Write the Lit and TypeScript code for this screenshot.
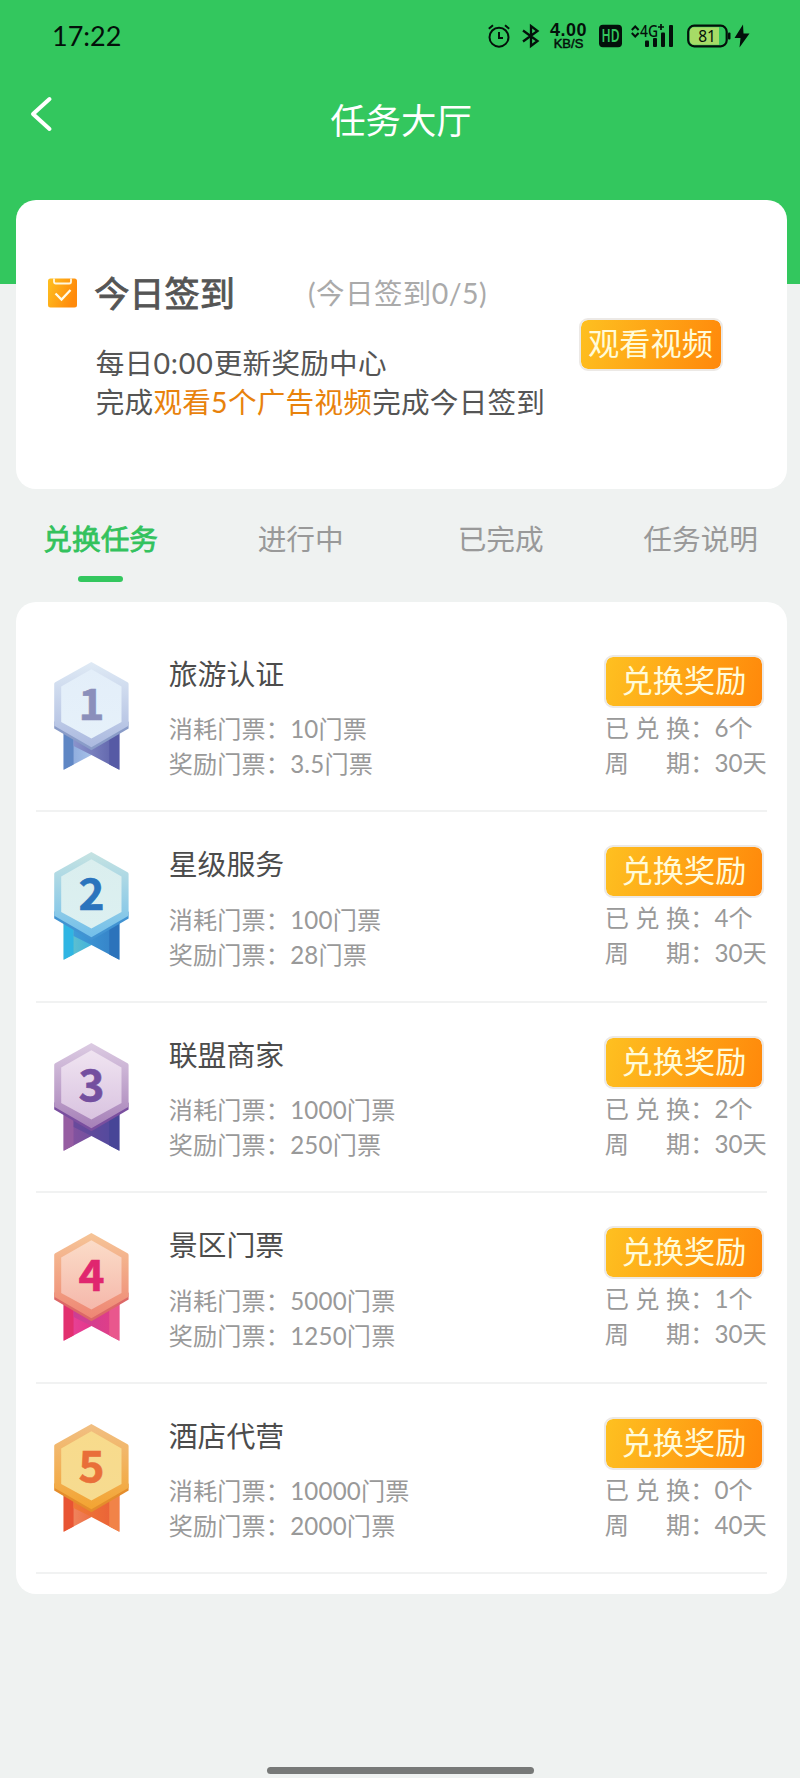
import { LitElement, html, svg, css } from "lit";
import { customElement, property } from "lit/decorators.js";

interface Medal {
  edgeTop: string; edgeBottom: string; side: string;
  faceTop: string; faceBottom: string; digit: string;
  left: string; midA: string; midB: string; darkA: string; darkB: string; right: string;
}

interface Task {
  title: string; cost: string; reward: string; used: string; period: string; medal: Medal;
}

const TASKS: Task[] = [
  { title: "旅游认证", cost: "10", reward: "3.5", used: "6", period: "30",
    medal: { edgeTop: "#dfeaf5", edgeBottom: "#abb9df", side: "#8a9cc8", faceTop: "#e3eef9", faceBottom: "#e6f1fa", digit: "#8b8fbb",
      left: "#5f86c4", midA: "#86a3d8", midB: "#a9c4ea", darkA: "#8a93cb", darkB: "#5b5fa8", right: "#565aa5" } },
  { title: "星级服务", cost: "100", reward: "28", used: "4", period: "30",
    medal: { edgeTop: "#c6e3e2", edgeBottom: "#72bfea", side: "#4193d2", faceTop: "#daeeee", faceBottom: "#dcf0f1", digit: "#2b74bd",
      left: "#2fb5e3", midA: "#6cc5c9", midB: "#3cb1de", darkA: "#3f9bd8", darkB: "#3480c6", right: "#2c73bb" } },
  { title: "联盟商家", cost: "1000", reward: "250", used: "2", period: "30",
    medal: { edgeTop: "#dccbe2", edgeBottom: "#a680b8", side: "#7a4f9f", faceTop: "#f0e4f1", faceBottom: "#d9c3e0", digit: "#744f9f",
      left: "#965da2", midA: "#8b549f", midB: "#70509f", darkA: "#6a4a9b", darkB: "#4f4a9e", right: "#474597" } },
  { title: "景区门票", cost: "5000", reward: "1250", used: "1", period: "30",
    medal: { edgeTop: "#f6c597", edgeBottom: "#ee8674", side: "#dc6867", faceTop: "#fbdcc8", faceBottom: "#f5b8ab", digit: "#e0266f",
      left: "#e2306f", midA: "#e8479a", midB: "#e4338a", darkA: "#cb3f94", darkB: "#e43d86", right: "#e9578d" } },
  { title: "酒店代营", cost: "10000", reward: "2000", used: "0", period: "40",
    medal: { edgeTop: "#f1bf83", edgeBottom: "#f3a431", side: "#e48d2c", faceTop: "#f8db8c", faceBottom: "#f6db90", digit: "#e96f39",
      left: "#e85433", midA: "#f18e67", midB: "#ec6c43", darkA: "#ef7a35", darkB: "#ea5e38", right: "#f18348" } },
];

@customElement("status-bar")
class StatusBar extends LitElement {
  static styles = css`
    :host { display: flex; align-items: center; height: 72px; padding: 0 50.500px 0 52px; color: #03100a; box-sizing: border-box; }
    .time { font-size: 27px; line-height: 36px; margin: -1px auto 0 0; }
    svg { display: block; flex: none; overflow: visible; }
    .alarm { margin-right: 11.500px; }
    .bt { margin-right: 8.500px; }
    .speed { width: 40px; margin-right: 10px; text-align: center; font-family: "Liberation Sans", sans-serif; white-space: nowrap; }
    .num { font-size: 18px; line-height: 15px; font-weight: 700; letter-spacing: 0.500px; }
    .unit { font-size: 13px; line-height: 12px; -webkit-text-stroke: 0.500px; }
    .hd { margin-right: 9.500px; }
    .signal { margin-right: 12.500px; }
    .battery { margin-right: 3px; }
    text { font-family: "Noto Sans", sans-serif; }
  `;
  render() {
    return html`
      <div class="time">17:22</div>
      <svg class="alarm" width="23" height="24" viewBox="0 0 23 24" fill="none" stroke="currentColor" stroke-width="2">
        <circle cx="11" cy="13.2" r="9.5" /><path d="M11 8v6h4M.8 4.700 5 1.300M21.200 4.700l-4.200-3.400" />
      </svg>
      <svg class="bt" width="18" height="24" viewBox="0 0 18 24" fill="none" stroke="currentColor" stroke-width="2.300">
        <path d="M1 6.500 15.500 17 9 22V2l6.500 5L1 17.500" />
      </svg>
      <div class="speed"><div class="num">4.00</div><div class="unit">KB/S</div></div>
      <svg class="hd" width="23" height="24" viewBox="0 0 23 24">
        <rect y=".7" width="23" height="22.600" rx="4" fill="currentColor" />
        <text x="11.5" y="18" text-anchor="middle" font-size="17" font-weight="600" textLength="18" lengthAdjust="spacingAndGlyphs" fill="#33c75e">HD</text>
      </svg>
      <svg class="signal" width="43" height="24" viewBox="0 0 43 24" fill="currentColor">
        <path d="M.8 6 4.200 2.500 7.600 6M.8 9l3.400 3.500L7.600 9" fill="none" stroke="currentColor" stroke-width="2" />
        <text x="9" y="12.500" font-size="15.500" font-weight="500" textLength="18" lengthAdjust="spacingAndGlyphs">4G</text>
        <path d="M30 0v6M27 3h6" stroke="currentColor" stroke-width="1.700" />
        <rect x="14" y="16.500" width="4" height="6.500" rx="1" /><rect x="22" y="14" width="4" height="9" rx="1" />
        <rect x="30" y="8.500" width="4" height="14.500" rx="1" /><rect x="38" y="1" width="4" height="22" rx="1" />
      </svg>
      <svg class="battery" width="44" height="24" viewBox="0 0 44 24">
        <rect x="1.200" y="1.700" width="38.500" height="20.600" rx="6" fill="none" stroke="currentColor" stroke-width="2.200" />
        <path d="M7 3.300h25v17.400H7a4.200 4.200 0 0 1-4.200-4.200v-9A4.200 4.200 0 0 1 7 3.300Z" fill="#a6db66" />
        <rect x="41" y="8.500" width="2.500" height="7" rx="1" fill="currentColor" />
        <text x="20" y="17.500" text-anchor="middle" font-size="15.500" fill="currentColor">81</text>
      </svg>
      <svg width="16" height="24" viewBox="0 0 16 24"><path d="M9 .5.500 14h6L5.500 23.500 15.500 9.500H9.500Z" fill="currentColor" /></svg>
    `;
  }
}

@customElement("rank-medal")
class RankMedal extends LitElement {
  @property({ type: Number }) rank = 1;
  @property({ attribute: false }) tone!: Medal;
  static styles = css`
    :host { display: block; width: 75px; height: 109px; }
    svg { display: block; }
    text { font-family: "Noto Sans CJK SC", sans-serif; font-weight: 700; font-size: 43.500px; stroke-width: 0.600px; }
  `;
  render() {
    const t = this.tone;
    const grad = (id: string, a: string, b: string, down: boolean) => svg`
      <linearGradient id=${id} x1="0" y1="0" x2=${down ? 0 : 1} y2=${down ? 1 : 0}>
        <stop offset="0" stop-color=${a} /><stop offset="1" stop-color=${b} />
      </linearGradient>`;
    return html`<svg width="75" height="109" viewBox="0 0 74 109" preserveAspectRatio="none">
      <defs>
        ${grad("edge", t.edgeTop, t.edgeBottom, true)}
        ${grad("face", t.faceTop, t.faceBottom, true)}
        ${grad("mid", t.midA, t.midB, false)}
        ${grad("dark", t.darkA, t.darkB, false)}
      </defs>
      <path d="M9.500 60V107.800L37 93 40 80V60Z" fill="url(#mid)" />
      <path d="M9.500 60V107.800L19.300 102.500V60Z" fill=${t.left} />
      <path d="M19.300 84 37 93 64.500 107.800V60H19.300Z" fill="url(#dark)" />
      <path d="M54.500 60V102.500L64.500 107.800V60Z" fill=${t.right} />
      <path d="M36.900 6 73.600 60V66.500L36.900 88.200.2 66.500V60Z" fill=${t.side} />
      <path d="M36.900 0 72.600 20.200Q73.600 20.800 73.600 22V63.700L36.900 85.200.2 63.700V22Q.2 20.800 1.200 20.200Z" fill="url(#edge)" />
      <path d="M36.900 7.300 66.600 24.600V60L36.900 76.500 7.100 60V24.600Z" fill="url(#face)" />
      <text x="36.900" y="57.800" text-anchor="middle" fill=${t.digit} stroke=${t.digit}>${this.rank}</text>
    </svg>`;
  }
}

@customElement("app-root")
class AppRoot extends LitElement {
  static styles = css`
    :host { display: flex; flex-direction: column; box-sizing: border-box; width: 800px; height: 1778px; overflow: hidden;
      background: linear-gradient(#33c75e 284.500px, #eff2f1 284.500px); font-family: Lato, "Noto Sans CJK SC", sans-serif; }
    .nav { display: grid; grid-template-columns: 101px 1fr 99px; height: 128px; color: #fff; }
    .back { display: block; margin: 24px 0 0 30px; }
    .heading { font-size: 35.400px; line-height: 40px; text-align: center; margin-top: 29px; }
    .card { margin: 0 13.500px 0 15.700px; background: #fff; border-radius: 20px; box-sizing: border-box; }
    .sign { height: 289px; display: flex; padding: 71.500px 64px 0 32.500px; justify-content: space-between; }
    .head { display: flex; align-items: center; height: 42px; }
    .head svg { display: block; margin-right: 17px; }
    .today { font-size: 35.200px; line-height: 42px; color: #555; -webkit-text-stroke: 0.900px #555; }
    .count { font-size: 28.500px; line-height: 42px; margin: 1px 0 0 73px; color: #aaa; white-space: nowrap; letter-spacing: 0.450px; }
    .info { font-size: 28.600px; line-height: 39px; color: #555; margin: 30.500px 0 0 47.500px; white-space: nowrap; letter-spacing: 0.250px; }
    .info i { font-style: normal; letter-spacing: 0.850px; }
    .info b { font-weight: 400; color: #e8820c; }
    .btn { box-sizing: border-box; height: 53px; padding: 0; border: 2px solid #ece9e6; border-radius: 9px; color: #fffbd9;
      background: linear-gradient(105deg, #fec121, #ff870a) border-box; background-clip: padding-box; font: inherit; font-size: 31.200px; line-height: 44px; display: block; white-space: nowrap; }
    .btn span { display: block; margin-top: -3px; }
    .watch { width: 144px; margin-top: 46.500px; flex: none; }
    .swap { width: 160px; margin-left: 0; }
    .tabs { display: grid; grid-template-columns: repeat(4, 200px); height: 113px; padding: 30px 0 0 0.700px; box-sizing: border-box; font-size: 28.700px; line-height: 40px; color: #999; text-align: center; }
    .on { color: #33c25d; -webkit-text-stroke: 0.800px #33c25d; }
    .on::after { content: ""; display: block; width: 44.500px; height: 6.500px; border-radius: 3px; background: #33c75e; margin: 16.500px auto 0; }
    .list { height: 992px; padding: 19.800px 19.500px 0 20.300px; flex: none; }
    .row { display: grid; grid-template-columns: 132.700px 1fr 163px; height: 190.500px; box-sizing: border-box; border-bottom: 2px solid #f1f2f2; }
    .row rank-medal { margin: 40px 0 0 18px; }
    .title { font-size: 28.900px; line-height: 36px; margin: 34px 0 19.500px; color: #4c4c4c; }
    .meta { font-size: 24.100px; line-height: 35px; color: #999; white-space: nowrap; letter-spacing: 0.200px; }
    .side { padding-top: 33.200px; }
    .pair { display: flex; font-size: 24.200px; line-height: 35px; color: #999; white-space: nowrap; margin-left: 0.700px; }
    .used { padding-top: 2px; }
    .key { display: flex; justify-content: space-between; width: 85.500px; }
    .handle { width: 267px; height: 7px; border-radius: 3.500px; background: #777978; margin: auto auto 4px; }
  `;

  private row(t: Task, i: number) {
    return html`<div class="row">
      <rank-medal .rank=${i + 1} .tone=${t.medal}></rank-medal>
      <div>
        <div class="title">${t.title}</div>
        <div class="meta">消耗门票：${t.cost}门票</div>
        <div class="meta">奖励门票：${t.reward}门票</div>
      </div>
      <div class="side">
        <button class="btn swap"><span>兑换奖励</span></button>
        <div class="pair used"><span class="key"><span>已</span><span>兑</span><span>换</span></span>：${t.used}个</div>
        <div class="pair"><span class="key"><span>周</span><span>期</span></span>：${t.period}天</div>
      </div>
    </div>`;
  }

  render() {
    return html`
      <status-bar></status-bar>
      <div class="nav">
        <svg class="back" width="24" height="36" viewBox="0 0 24 36" fill="none" stroke="#fff" stroke-width="4" stroke-linecap="round" stroke-linejoin="round">
          <path d="M19.500 3 3 18 19.500 33" />
        </svg>
        <div class="heading">任务大厅</div>
      </div>
      <div class="card sign">
        <div>
          <div class="head">
            <svg width="29" height="30" viewBox="0 0 29 30">
              <defs><linearGradient id="g" x2="1" y2=".35"><stop stop-color="#fec020" /><stop offset="1" stop-color="#ff8a0b" /></linearGradient></defs>
              <rect y=".5" width="29" height="29" rx="2.500" fill="url(#g)" />
              <path d="M6 .5v3.300q0 1.700 1.700 1.700h13.600q1.700 0 1.700-1.700V.5" fill="none" stroke="#fff7e0" stroke-width="1.800" />
              <path d="m7.500 15.500 6 6 9-9.500" fill="none" stroke="#fffbe8" stroke-width="2.300" />
            </svg>
            <span class="today">今日签到</span><span class="count">(今日签到0/5)</span>
          </div>
          <div class="info">每日<i>0:00</i>更新奖励中心<br />完成<b>观看5个广告视频</b>完成今日签到</div>
        </div>
        <button class="btn watch"><span>观看视频</span></button>
      </div>
      <div class="tabs"><div class="on">兑换任务</div><div>进行中</div><div>已完成</div><div>任务说明</div></div>
      <div class="card list">${TASKS.map((t, i) => this.row(t, i))}</div>
      <div class="handle"></div>
    `;
  }
}
